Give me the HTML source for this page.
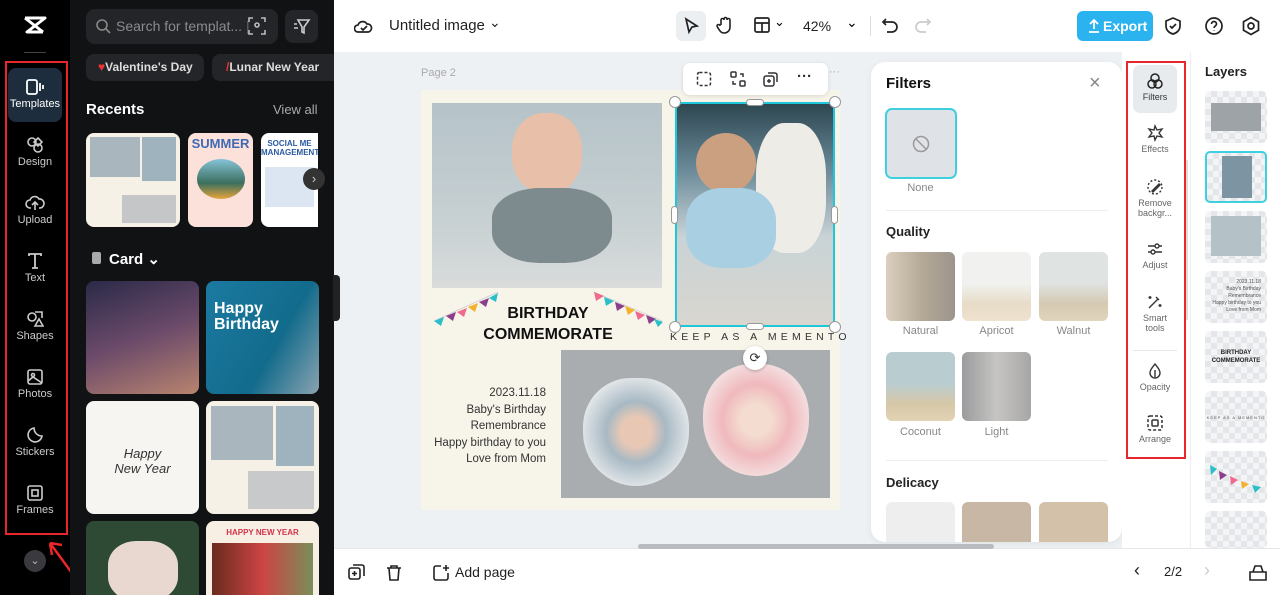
<!DOCTYPE html>
<html><head><meta charset="utf-8">
<style>
*{box-sizing:border-box;margin:0;padding:0}
body{width:1280px;height:595px;overflow:hidden;font-family:"Liberation Sans",sans-serif;background:#eef1f4;position:relative}
.abs{position:absolute}
.nav{left:0;top:0;width:70px;height:595px;background:#000}
.navi{position:absolute;left:8px;width:54px;height:54px;color:#ccc;font-size:11px;text-align:center}
.navi svg{display:block;margin:10px auto 2px}
.panel{left:70px;top:0;width:264px;height:595px;background:#111214}
.thumb{position:absolute;border-radius:8px;overflow:hidden}
.top{left:334px;top:0;width:946px;height:52px;background:#fff}
.bot{left:334px;top:548px;width:946px;height:47px;background:#fff;border-top:1px solid #e5e7ea}
.tool{position:absolute;left:1133px;width:44px;text-align:center;font-size:9px;color:#666}
.tool svg{display:block;margin:0 auto 2px}
.fl{position:absolute;font-size:11px;color:#888;text-align:center;width:69px}
.fi{position:absolute;width:69px;height:69px;border-radius:6px}
.lay{position:absolute;left:1205px;width:62px;height:52px;border-radius:5px;background:repeating-conic-gradient(#e4e6e9 0 25%,#f3f4f6 0 50%) 0 0/12px 12px}
</style></head><body>

<!-- left nav -->
<div class="abs nav">
  <svg class="abs" style="left:23px;top:16px" width="24" height="18" viewBox="0 0 24 18"><path d="M2 2h20L4 16h16M2 2l18 14M4 16" stroke="#fff" stroke-width="3" fill="none" stroke-linejoin="round"/></svg>
  <div class="abs" style="left:24px;top:52px;width:22px;height:1px;background:#444"></div>
  <div class="abs" style="left:5px;top:61px;width:63px;height:474px;border:2px solid #e8262b"></div>
  <div class="navi" style="top:68px;background:#1e2d3d;border-radius:8px;color:#fff"><svg width="20" height="18" viewBox="0 0 20 18" fill="none" stroke="#fff" stroke-width="1.8"><rect x="2" y="2" width="10" height="14" rx="2"/><path d="M15 5v8M18 7v4"/></svg>Templates</div>
  <div class="navi" style="top:126px"><svg width="18" height="18" viewBox="0 0 18 18" fill="none" stroke="#ccc" stroke-width="1.6"><circle cx="6" cy="6" r="4"/><circle cx="12" cy="12" r="4"/><path d="M12 2l4 4-4 4-4-4z"/></svg>Design</div>
  <div class="navi" style="top:184px"><svg width="20" height="18" viewBox="0 0 20 18" fill="none" stroke="#ccc" stroke-width="1.6"><path d="M6 14H5a4 4 0 010-8 5 5 0 019-1 4 4 0 011 9h-1M10 8v8M7 11l3-3 3 3"/></svg>Upload</div>
  <div class="navi" style="top:242px"><svg width="18" height="18" viewBox="0 0 18 18" fill="none" stroke="#ccc" stroke-width="1.8"><path d="M3 4V2h12v2M9 2v14M6 16h6"/></svg>Text</div>
  <div class="navi" style="top:300px"><svg width="18" height="18" viewBox="0 0 18 18" fill="none" stroke="#ccc" stroke-width="1.6"><circle cx="6" cy="7" r="4"/><path d="M9 2h7v6M9 16l4-7 4 7z"/></svg>Shapes</div>
  <div class="navi" style="top:358px"><svg width="18" height="18" viewBox="0 0 18 18" fill="none" stroke="#ccc" stroke-width="1.6"><rect x="2" y="2" width="14" height="14" rx="2"/><circle cx="7" cy="7" r="1.5"/><path d="M2 13l5-4 9 6"/></svg>Photos</div>
  <div class="navi" style="top:416px"><svg width="18" height="18" viewBox="0 0 18 18" fill="none" stroke="#ccc" stroke-width="1.6"><path d="M16 10A7 7 0 1 1 8 2c0 4 3 8 8 8z"/></svg>Stickers</div>
  <div class="navi" style="top:474px"><svg width="18" height="18" viewBox="0 0 18 18" fill="none" stroke="#ccc" stroke-width="1.6"><rect x="2" y="2" width="14" height="14" rx="2"/><rect x="6" y="6" width="6" height="6"/></svg>Frames</div>
  <div class="abs" style="left:24px;top:550px;width:22px;height:22px;border-radius:50%;background:#3a3a3e;color:#bbb;font-size:11px;text-align:center;line-height:22px">⌄</div>
  <svg class="abs" style="left:42px;top:535px" width="40" height="50"><path d="M35 45L8 8M8 8l2 12M8 8l12 2" stroke="#e8262b" stroke-width="2.5" fill="none"/></svg>
</div>

<!-- side panel -->
<div class="abs panel">
  <div class="abs" style="left:16px;top:9px;width:192px;height:35px;border-radius:9px;background:#242528;color:#8a8b8f;font-size:14px;line-height:35px;padding-left:30px">Search for templat... <span style="color:#666">|</span></div>
  <svg class="abs" style="left:25px;top:18px" width="16" height="16" fill="none" stroke="#888" stroke-width="1.6"><circle cx="7" cy="7" r="5"/><path d="M11 11l4 4"/></svg>
  <svg class="abs" style="left:178px;top:17px" width="18" height="18" fill="none" stroke="#bbb" stroke-width="1.6"><path d="M1 5V1h4M13 1h4v4M17 13v4h-4M5 17H1v-4"/><circle cx="9" cy="8" r="2"/></svg>
  <div class="abs" style="left:215px;top:10px;width:33px;height:33px;border-radius:8px;background:#242528"></div>
  <svg class="abs" style="left:223px;top:18px" width="18" height="18" fill="none" stroke="#ccc" stroke-width="1.6"><path d="M5 2h11l-5 7v6l-2-1v-5z M1 6h3M1 10h4"/></svg>
  <div class="abs" style="left:16px;top:54px;width:118px;height:27px;border-radius:8px;background:#242528;color:#ddd;font-size:12px;font-weight:bold;line-height:27px;padding-left:12px"><span style="color:#e33">♥</span>Valentine's Day</div>
  <div class="abs" style="left:142px;top:54px;width:122px;height:27px;border-radius:8px 0 0 8px;background:#242528;color:#ddd;font-size:12px;font-weight:bold;line-height:27px;padding-left:14px;overflow:hidden;white-space:nowrap"><span style="color:#e33">/</span>Lunar New Year</div>
  <div class="abs" style="left:16px;top:101px;color:#fff;font-size:15px;font-weight:bold">Recents</div>
  <div class="abs" style="left:203px;top:102px;color:#aaa;font-size:13px">View all</div>
  <div class="thumb" style="left:16px;top:133px;width:94px;height:94px;background:#f5f1e6"><div style="margin:4px;width:50px;height:40px;background:#a9b6bd"></div><div class="abs" style="left:56px;top:4px;width:34px;height:44px;background:#9fb3bf"></div><div class="abs" style="left:36px;top:62px;width:54px;height:28px;background:#c4c6c8"></div></div>
  <div class="thumb" style="left:118px;top:133px;width:65px;height:94px;background:#fbe1da"><div style="color:#3f6ab3;font-weight:bold;font-size:13px;text-align:center;margin-top:3px">SUMMER</div><div style="margin:8px auto 0;width:48px;height:40px;border-radius:50%;background:linear-gradient(#86c3d9,#3b6f5e 60%,#e8a43b)"></div></div>
  <div class="thumb" style="left:191px;top:133px;width:57px;height:94px;background:#fff;border-radius:8px 0 0 8px"><div style="color:#2b5aa0;font-size:8px;font-weight:bold;text-align:center;margin-top:6px">SOCIAL ME MANAGEMENT</div><div style="margin:10px 4px;height:40px;background:#dce6f2"></div></div>
  <div class="abs" style="left:233px;top:168px;width:22px;height:22px;border-radius:50%;background:#333;color:#ccc;text-align:center;line-height:22px;font-size:13px">›</div>
  <div class="abs" style="left:22px;top:250px;color:#fff;font-size:15px;font-weight:bold"><span style="display:inline-block;width:9px;height:12px;background:#aaa;border-radius:2px;margin-right:8px"></span>Card ⌄</div>
  <div class="thumb" style="left:16px;top:281px;width:113px;height:113px;background:linear-gradient(160deg,#2a2a48,#6b4a6a 50%,#b8846f)"></div>
  <div class="thumb" style="left:136px;top:281px;width:113px;height:113px;background:linear-gradient(120deg,#1b7aa1,#126b8c 60%,#8aa3b0)"><div style="color:#fff;font-weight:bold;font-size:16px;margin:20px 0 0 8px;line-height:16px">Happy<br>Birthday</div></div>
  <div class="thumb" style="left:16px;top:401px;width:113px;height:113px;background:#f7f5f2"><div style="text-align:center;margin-top:45px;font-style:italic;font-size:13px;color:#333">Happy<br>New Year</div></div>
  <div class="thumb" style="left:136px;top:401px;width:113px;height:113px;background:#f5f1e6"><div style="margin:5px;width:62px;height:54px;background:#a9b6bd"></div><div class="abs" style="left:70px;top:5px;width:38px;height:60px;background:#9fb3bf"></div><div class="abs" style="left:42px;top:70px;width:66px;height:38px;background:#c7c9ca"></div></div>
  <div class="thumb" style="left:16px;top:521px;width:113px;height:74px;background:#2e4a35;border-radius:8px 8px 0 0"><div style="margin:20px auto 0;width:70px;height:60px;border-radius:40%;background:#e9d8d0"></div></div>
  <div class="thumb" style="left:136px;top:521px;width:113px;height:74px;background:#f7efe3;border-radius:8px 8px 0 0"><div style="color:#d1344a;font-size:8px;font-weight:bold;text-align:center;margin-top:7px">HAPPY NEW YEAR</div><div style="margin:6px;height:60px;background:linear-gradient(90deg,#6a2b1e,#c44 50%,#7a8e5a)"></div></div>
</div>
<div class="abs" style="left:333px;top:275px;width:7px;height:46px;background:#222;border-radius:0 4px 4px 0"></div>

<!-- top bar -->
<div class="abs top">
  <svg class="abs" style="left:20px;top:17px" width="20" height="18" fill="none" stroke="#222" stroke-width="1.7"><path d="M5 15H4a3.5 3.5 0 010-7 5 5 0 019-1 4 4 0 011 8zM7 11l2 2 4-4"/></svg>
  <div class="abs" style="left:55px;top:17px;font-size:15px;color:#222">Untitled image</div>
  <div class="abs" style="left:155px;top:14px;font-size:14px;color:#222">⌄</div>
  <div class="abs" style="left:342px;top:11px;width:30px;height:30px;border-radius:6px;background:#eceff2"></div>
  <svg class="abs" style="left:349px;top:17px" width="16" height="18" fill="none" stroke="#222" stroke-width="1.7"><path d="M3 2l11 7-5 1-3 5z"/></svg>
  <svg class="abs" style="left:382px;top:15px" width="18" height="20" fill="none" stroke="#222" stroke-width="1.6"><path d="M5 10V5a1.5 1.5 0 013 0V4a1.5 1.5 0 013 0v1a1.5 1.5 0 013 0v7c0 4-3 6-6 6s-4-2-6-5l-1-2a1.5 1.5 0 013 0"/></svg>
  <svg class="abs" style="left:419px;top:16px" width="18" height="18" fill="none" stroke="#222" stroke-width="1.7"><rect x="2" y="2" width="14" height="14" rx="1.5"/><path d="M2 7h14M9 7v9"/></svg>
  <div class="abs" style="left:440px;top:14px;font-size:13px">⌄</div>
  <div class="abs" style="left:469px;top:18px;font-size:14px;color:#222">42%</div>
  <div class="abs" style="left:512px;top:14px;font-size:14px">⌄</div>
  <div class="abs" style="left:536px;top:16px;width:1px;height:20px;background:#ddd"></div>
  <svg class="abs" style="left:547px;top:17px" width="18" height="18" fill="none" stroke="#222" stroke-width="1.7"><path d="M5 2L2 5l3 3M2 5h9a5 5 0 010 10H6"/></svg>
  <svg class="abs" style="left:580px;top:17px" width="18" height="18" fill="none" stroke="#ccc" stroke-width="1.7"><path d="M13 2l3 3-3 3M16 5H7a5 5 0 000 10h5"/></svg>
  <div class="abs" style="left:743px;top:11px;width:76px;height:30px;border-radius:6px;background:#2bb3f0;color:#fff;font-size:14px;font-weight:bold;line-height:30px;padding-left:26px">Export</div>
  <svg class="abs" style="left:753px;top:18px" width="14" height="16" fill="none" stroke="#fff" stroke-width="1.8"><path d="M7 2v9M3 6l4-4 4 4M2 14h10"/></svg>
  <svg class="abs" style="left:830px;top:16px" width="18" height="20" fill="none" stroke="#222" stroke-width="1.7"><path d="M9 2l7 3v5c0 4-3 7-7 8-4-1-7-4-7-8V5zM6 10l2 2 4-4"/></svg>
  <svg class="abs" style="left:870px;top:16px" width="20" height="20" fill="none" stroke="#222" stroke-width="1.7"><circle cx="10" cy="10" r="8"/><path d="M7.5 8a2.5 2.5 0 015 0c0 2-2.5 2-2.5 4M10 14.5v.5"/></svg>
  <svg class="abs" style="left:907px;top:16px" width="20" height="20" fill="none" stroke="#222" stroke-width="1.7"><path d="M10 1.5l7.5 4.25v8.5L10 18.5 2.5 14.25v-8.5z"/><circle cx="10" cy="10" r="3"/></svg>
</div>

<!-- canvas -->
<div class="abs" style="left:421px;top:67px;font-size:11px;color:#aaa">Page 2</div>
<div class="abs" style="left:829px;top:66px;font-size:11px;color:#aaa">···</div>
<div class="abs" style="left:421px;top:90px;width:419px;height:420px;background:#f7f4ea"></div>
<div class="abs" style="left:432px;top:103px;width:230px;height:185px;background:linear-gradient(180deg,#b5c3c8,#c6cfd2 60%,#d9dcdb);overflow:hidden">
  <div class="abs" style="left:80px;top:10px;width:70px;height:80px;border-radius:45%;background:#e8bfa8"></div>
  <div class="abs" style="left:60px;top:85px;width:120px;height:75px;border-radius:40%;background:#7d8b8f"></div>
</div>
<div class="abs" style="left:676px;top:103px;width:158px;height:223px;background:linear-gradient(180deg,#2d4650 0,#6a8a99 30%,#c9d3d6 60%,#d9d6cf);overflow:hidden">
  <div class="abs" style="left:80px;top:20px;width:70px;height:130px;border-radius:40%;background:#eeece7"></div>
  <div class="abs" style="left:20px;top:30px;width:60px;height:60px;border-radius:50%;background:#caa080"></div>
  <div class="abs" style="left:10px;top:85px;width:90px;height:80px;border-radius:40%;background:#a9cfe3"></div>
</div>
<div class="abs" style="left:675px;top:102px;width:160px;height:225px;border:2px solid #1fc8d8"></div>
<div class="abs" style="left:669px;top:96px;width:12px;height:12px;border-radius:50%;background:#fff;border:1px solid #999"></div>
<div class="abs" style="left:829px;top:96px;width:12px;height:12px;border-radius:50%;background:#fff;border:1px solid #999"></div>
<div class="abs" style="left:669px;top:321px;width:12px;height:12px;border-radius:50%;background:#fff;border:1px solid #999"></div>
<div class="abs" style="left:829px;top:321px;width:12px;height:12px;border-radius:50%;background:#fff;border:1px solid #999"></div>
<div class="abs" style="left:746px;top:99px;width:18px;height:7px;border-radius:4px;background:#fff;border:1px solid #999"></div>
<div class="abs" style="left:746px;top:323px;width:18px;height:7px;border-radius:4px;background:#fff;border:1px solid #999"></div>
<div class="abs" style="left:671px;top:206px;width:7px;height:18px;border-radius:4px;background:#fff;border:1px solid #999"></div>
<div class="abs" style="left:831px;top:206px;width:7px;height:18px;border-radius:4px;background:#fff;border:1px solid #999"></div>
<div class="abs" style="left:683px;top:63px;width:145px;height:32px;border-radius:7px;background:#fff;box-shadow:0 1px 4px rgba(0,0,0,.12)"></div>
<svg class="abs" style="left:696px;top:71px" width="16" height="16" fill="none" stroke="#333" stroke-width="1.5" stroke-dasharray="3 2"><rect x="1.5" y="1.5" width="13" height="13" rx="2"/></svg>
<svg class="abs" style="left:730px;top:71px" width="16" height="16" fill="none" stroke="#333" stroke-width="1.5"><rect x="1" y="1" width="5" height="5" rx="1"/><rect x="10" y="10" width="5" height="5" rx="1"/><path d="M10 3h3v3M6 13H3v-3"/></svg>
<svg class="abs" style="left:763px;top:71px" width="16" height="16" fill="none" stroke="#333" stroke-width="1.5"><rect x="1" y="5" width="10" height="10" rx="2"/><path d="M5 2h7a2 2 0 012 2v7M6 8v4M4 10h4"/></svg>
<div class="abs" style="left:797px;top:68px;font-size:15px;color:#333;font-weight:bold">···</div>
<!-- bunting -->
<svg class="abs" style="left:432px;top:288px" width="240" height="40">
<path d="M2 33L66 4M162 4L230 33" stroke="#ccc" stroke-width=".7"/>
<polygon points="2,33 12,29 9,38" fill="#2bc0c8"/><polygon points="14,28 24,24 21,33" fill="#8b3f8b"/><polygon points="25,24 35,20 32,29" fill="#f06a8e"/><polygon points="36,19 46,15 43,24" fill="#f5b12e"/><polygon points="47,14 57,10 54,19" fill="#8b3f8b"/><polygon points="57,10 66,5 64,14" fill="#2bc0c8"/>
<polygon points="162,4 172,8 164,13" fill="#f06a8e"/><polygon points="172,9 182,13 174,18" fill="#2bc0c8"/><polygon points="183,14 193,18 185,23" fill="#8b3f8b"/><polygon points="193,18 203,22 196,27" fill="#f5b12e"/><polygon points="203,23 213,27 206,32" fill="#f06a8e"/><polygon points="214,27 224,31 217,36" fill="#8b3f8b"/><polygon points="222,31 231,34 226,39" fill="#2bc0c8"/>
</svg>
<div class="abs" style="left:483px;top:303px;width:130px;text-align:center;font-size:16px;font-weight:bold;color:#111;line-height:21px">BIRTHDAY<br>COMMEMORATE</div>
<div class="abs" style="left:670px;top:331px;font-size:10.5px;letter-spacing:4.2px;color:#333;white-space:nowrap">KEEP AS A MEMENTO</div>
<div class="abs" style="left:561px;top:350px;width:269px;height:148px;background:#a9adaf">
  <div class="abs" style="left:22px;top:28px;width:106px;height:108px;border-radius:45% 45% 50% 50%;background:radial-gradient(#e8c8b5 20%,#a8b9c4 40%,#eef0f0 80%)"></div>
  <div class="abs" style="left:142px;top:14px;width:106px;height:112px;border-radius:45% 45% 50% 50%;background:radial-gradient(#f4dcd0 20%,#f0b9bd 45%,#f5eeee 85%)"></div>
</div>
<div class="abs" style="left:743px;top:346px;width:24px;height:24px;border-radius:50%;background:#fff;box-shadow:0 1px 3px rgba(0,0,0,.25);text-align:center;line-height:24px;font-size:13px;color:#333">⟳</div>
<div class="abs" style="left:430px;top:385px;width:116px;text-align:right;font-size:11.5px;color:#333;line-height:16.5px">2023.11.18<br>Baby's Birthday<br>Remembrance<br>Happy birthday to you<br>Love from Mom</div>

<!-- filters panel -->
<div class="abs" style="left:871px;top:62px;width:251px;height:480px;background:#fff;border-radius:14px;box-shadow:0 2px 8px rgba(0,0,0,.06);overflow:hidden">
  <div class="abs" style="left:15px;top:13px;font-size:15px;font-weight:bold;color:#111">Filters</div>
  <div class="abs" style="left:218px;top:10px;font-size:20px;color:#888">×</div>
  <div class="abs" style="left:14px;top:46px;width:72px;height:71px;border-radius:7px;background:#dfe3e8;border:2px solid #3fd0e0"></div>
  <svg class="abs" style="left:40px;top:72px" width="20" height="20" fill="none" stroke="#999" stroke-width="1.5"><circle cx="10" cy="10" r="7.5"/><path d="M5 5l10 10"/></svg>
  <div class="fl" style="left:15px;top:120px">None</div>
  <div class="abs" style="left:15px;top:148px;width:222px;height:1px;background:#eceef0"></div>
  <div class="abs" style="left:15px;top:162px;font-size:13px;font-weight:bold;color:#222">Quality</div>
  <div class="fi" style="left:15px;top:190px;background:linear-gradient(90deg,#dccfbf,#b6aa98 50%,#9c948c)"></div>
  <div class="fi" style="left:91px;top:190px;background:linear-gradient(#f1f2f0 45%,#e7dcc8 75%,#efe3cf)"></div>
  <div class="fi" style="left:168px;top:190px;background:linear-gradient(#dfe3e1 45%,#d5c9b2 75%,#e1d4bd)"></div>
  <div class="fl" style="left:15px;top:263px">Natural</div><div class="fl" style="left:91px;top:263px">Apricot</div><div class="fl" style="left:168px;top:263px">Walnut</div>
  <div class="fi" style="left:15px;top:290px;background:linear-gradient(#b9cdd1 45%,#d6c7a7 75%,#e3d3b5)"></div>
  <div class="fi" style="left:91px;top:290px;background:linear-gradient(90deg,#9b9b9d,#c6c5c3 50%,#a7a6a6)"></div>
  <div class="fl" style="left:15px;top:364px">Coconut</div><div class="fl" style="left:91px;top:364px">Light</div>
  <div class="abs" style="left:15px;top:398px;width:222px;height:1px;background:#eceef0"></div>
  <div class="abs" style="left:15px;top:413px;font-size:13px;font-weight:bold;color:#222">Delicacy</div>
  <div class="fi" style="left:15px;top:440px;background:#eee"></div>
  <div class="fi" style="left:91px;top:440px;background:#c8b7a4"></div>
  <div class="fi" style="left:168px;top:440px;background:#d3c2a9"></div>
</div>

<!-- tools column -->
<div class="abs" style="left:1122px;top:52px;width:68px;height:496px;background:#fff"></div>
<div class="abs" style="left:1185px;top:160px;width:3px;height:160px;background:#ddd;border-radius:2px"></div>
<div class="abs" style="left:1133px;top:65px;width:44px;height:48px;border-radius:7px;background:#e8ebee"></div>
<div class="tool" style="top:72px"><svg width="18" height="18" fill="none" stroke="#222" stroke-width="1.5"><circle cx="9" cy="6" r="4"/><circle cx="6" cy="12" r="4"/><circle cx="12" cy="12" r="4"/></svg><span style="color:#333">Filters</span></div>
<div class="tool" style="top:124px"><svg width="18" height="18" fill="none" stroke="#333" stroke-width="1.4"><path d="M9 2l2 4 5-1-3 4 3 4-5-1-2 4-1-4-5 1 3-4-3-4 5 1z"/></svg>Effects</div>
<div class="tool" style="top:178px"><svg width="18" height="18" fill="none" stroke="#333" stroke-width="1.4" ><circle cx="9" cy="9" r="7" stroke-dasharray="2 2"/><path d="M6 13l7-7 1 1-7 7z"/></svg>Remove<br>backgr...</div>
<div class="tool" style="top:240px"><svg width="18" height="18" fill="none" stroke="#333" stroke-width="1.4"><path d="M2 6h14M2 12h14"/><circle cx="11" cy="6" r="2" fill="#fff"/><circle cx="7" cy="12" r="2" fill="#fff"/></svg>Adjust</div>
<div class="tool" style="top:293px"><svg width="18" height="18" fill="none" stroke="#333" stroke-width="1.4"><path d="M3 15L12 6M10 4l3 3M4 3v3M2.5 4.5h3M14 11v3M12.5 12.5h3"/></svg>Smart<br>tools</div>
<div class="abs" style="left:1133px;top:350px;width:44px;height:1px;background:#e5e7ea"></div>
<div class="tool" style="top:362px"><svg width="18" height="18" fill="none" stroke="#333" stroke-width="1.4"><path d="M9 2c3 4 5 6 5 9a5 5 0 01-10 0c0-3 2-5 5-9zM9 8v7"/></svg>Opacity</div>
<div class="tool" style="top:414px"><svg width="18" height="18" fill="none" stroke="#333" stroke-width="1.5"><rect x="2" y="2" width="14" height="14" rx="2" stroke-dasharray="3 2"/><rect x="6" y="6" width="6" height="6" rx="1"/></svg>Arrange</div>
<div class="abs" style="left:1126px;top:61px;width:60px;height:398px;border:2px solid #e8262b"></div>
<svg class="abs" style="left:1188px;top:318px" width="50" height="50"><path d="M45 42L5 6M5 6l3 12M5 6l12 3" stroke="#e8262b" stroke-width="2.5" fill="none"/></svg>

<!-- layers -->
<div class="abs" style="left:1190px;top:52px;width:90px;height:496px;background:#fff;border-left:1px solid #eceef0"></div>
<div class="abs" style="left:1205px;top:64px;font-size:13px;font-weight:bold;color:#222">Layers</div>
<div class="lay" style="top:91px"><div class="abs" style="left:6px;top:12px;width:50px;height:28px;background:#9da3a6"></div></div>
<div class="lay" style="top:151px;border:2px solid #3fd0e0"><div class="abs" style="left:15px;top:3px;width:30px;height:42px;background:#7d95a3"></div></div>
<div class="lay" style="top:211px"><div class="abs" style="left:6px;top:5px;width:50px;height:40px;background:#b4c1c6"></div></div>
<div class="lay" style="top:271px"><div style="font-size:5px;color:#555;text-align:right;padding:8px 6px 0 0;line-height:7px">2023.11.18<br>Baby's Birthday<br>Remembrance<br>Happy birthday to you<br>Love from Mom</div></div>
<div class="lay" style="top:331px"><div style="font-size:6px;font-weight:bold;color:#222;text-align:center;padding-top:18px;line-height:8px">BIRTHDAY<br>COMMEMORATE</div></div>
<div class="lay" style="top:391px"><div style="font-size:4px;color:#555;text-align:center;padding-top:24px;letter-spacing:1px">KEEP AS A MEMENTO</div></div>
<div class="lay" style="top:451px"><svg width="62" height="52"><polygon points="5,14 12,18 6,24" fill="#2bc0c8"/><polygon points="14,20 22,24 15,29" fill="#8b3f8b"/><polygon points="25,25 33,29 26,34" fill="#f06a8e"/><polygon points="36,30 44,33 37,38" fill="#f5b12e"/><polygon points="47,34 56,36 50,42" fill="#2bc0c8"/></svg></div>
<div class="lay" style="top:511px;height:37px"></div>

<!-- bottom bar -->
<div class="abs bot">
  <svg class="abs" style="left:14px;top:15px" width="17" height="17" fill="none" stroke="#222" stroke-width="1.6"><rect x="1" y="4" width="11" height="11" rx="2"/><path d="M5 1h9a2 2 0 012 2v9M6.5 7v5M4 9.5h5"/></svg>
  <svg class="abs" style="left:52px;top:15px" width="16" height="17" fill="none" stroke="#222" stroke-width="1.6"><path d="M1 4h14M5 4V2h6v2M3 4l1 12h8l1-12"/></svg>
  <svg class="abs" style="left:99px;top:15px" width="17" height="17" fill="none" stroke="#222" stroke-width="1.6"><path d="M8 2H3a2 2 0 00-2 2v10a2 2 0 002 2h10a2 2 0 002-2V9M13 1v6M10 4h6"/></svg>
  <div class="abs" style="left:121px;top:15px;font-size:14px;color:#222">Add page</div>
  <div class="abs" style="left:304px;top:-5px;width:356px;height:5px;border-radius:3px;background:#b8bcc0"></div>
  <div class="abs" style="left:800px;top:11px;font-size:18px;color:#222">‹</div>
  <div class="abs" style="left:830px;top:15px;font-size:13px;color:#222">2/2</div>
  <div class="abs" style="left:870px;top:11px;font-size:18px;color:#ccc">›</div>
  <svg class="abs" style="left:915px;top:15px" width="18" height="17" fill="none" stroke="#222" stroke-width="1.6"><path d="M1 8h16v8H1zM4 8l2-6h6l2 6"/></svg>
</div>
</body></html>
